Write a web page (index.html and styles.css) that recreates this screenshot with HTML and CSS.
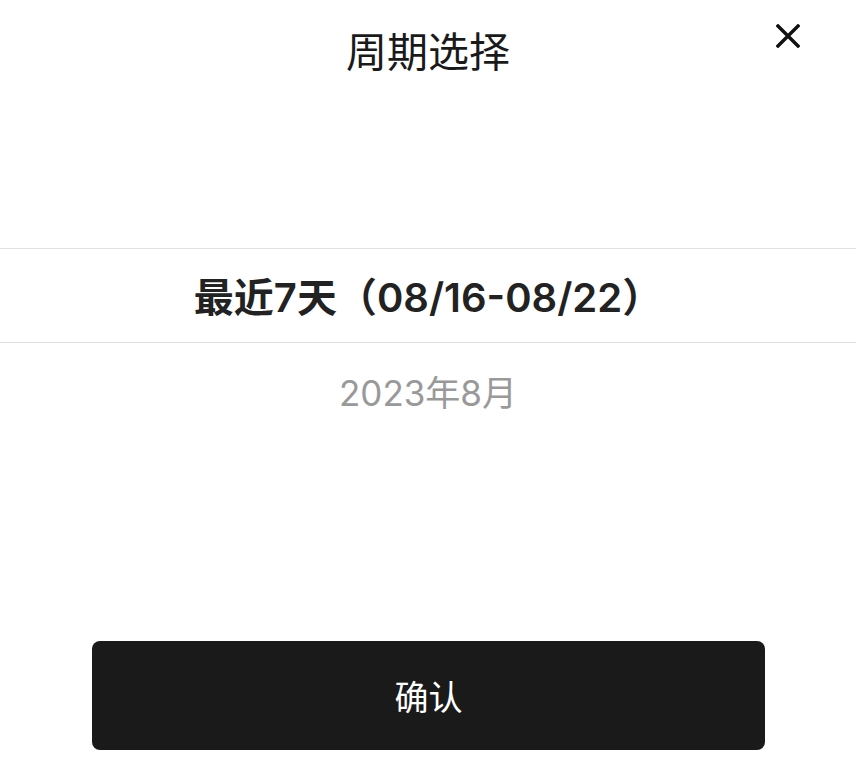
FILE: index.html
```html
<!DOCTYPE html>
<html lang="zh-CN">
<head>
<meta charset="utf-8">
<title>周期选择</title>
<link rel="stylesheet" href="styles.css">
</head>
<body>
<div class="sheet">
  <header class="header">
    <div class="spacer"></div>
    <h1 class="title">周期选择</h1>
    <div class="close-wrap">
      <button class="close" aria-label="关闭">
        <svg width="24" height="24" viewBox="0 0 24 24"><path d="M2 2 L22 22 M22 2 L2 22" stroke="#111" stroke-width="3.4" stroke-linecap="square" fill="none"/></svg>
      </button>
    </div>
  </header>
  <div class="picker">
    <div class="item"></div>
    <div class="item selected">最近7天（08/16-08/22）</div>
    <div class="item muted">2023年8月</div>
  </div>
  <div class="footer">
    <button class="confirm">确认</button>
  </div>
</div>
</body>
</html>
```
FILE: styles.css
```css
html, body {
  margin: 0;
  padding: 0;
  background: #fff;
}
body {
  font-family: "Noto Sans CJK SC", "Noto Sans", sans-serif;
  color: #222;
}
.sheet {
  width: 856px;
  height: 774px;
  display: flex;
  flex-direction: column;
}
.header {
  display: grid;
  grid-template-columns: 1fr auto 1fr;
  align-items: start;
  height: 153px;
}
.title {
  margin: 0;
  padding-top: 20px;
  font-size: 41px;
  font-weight: 400;
  line-height: 58px;
  color: #1a1a1a;
}
.close-wrap {
  display: flex;
  justify-content: flex-end;
  padding-right: 56px;
  padding-top: 24px;
}
.close {
  border: 0;
  background: none;
  padding: 0;
  width: 24px;
  height: 24px;
  display: block;
}
.close svg { display: block; }
.picker {
  display: flex;
  flex-direction: column;
}
.item {
  height: 95px;
  display: flex;
  align-items: center;
  justify-content: center;
  font-family: "Inter", "Noto Sans CJK SC", sans-serif;
  font-size: 36px;
  box-sizing: border-box;
}
.item.selected {
  border-top: 1px solid #e2e2e2;
  border-bottom: 1px solid #e2e2e2;
  font-weight: 600;
  font-size: 40px;
  color: #222;
  padding-bottom: 2px;
}
.item.muted {
  color: #999;
  font-size: 35px;
}
.footer {
  padding: 203px 91px 0 92px;
}
.confirm {
  width: 100%;
  height: 109px;
  border: 0;
  border-radius: 8px;
  background: #1a1a1a;
  color: #fff;
  font-family: "Noto Sans CJK SC", sans-serif;
  font-size: 34px;
  font-weight: 400;
  padding: 0;
}
```
